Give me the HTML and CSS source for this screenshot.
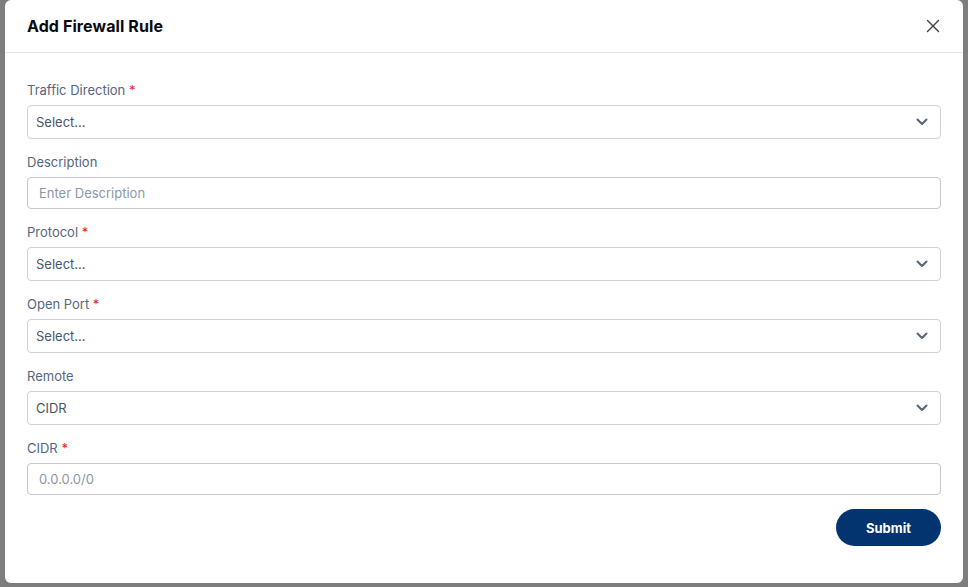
FILE: index.html
```html
<!DOCTYPE html>
<html lang="en">
<head>
  <meta charset="UTF-8" />
  <meta name="viewport" content="width=device-width, initial-scale=1" />
  <title>Add Firewall Rule</title>
  <link rel="stylesheet" href="styles.css">
</head>
<body>
  <div class="modal">
    <div class="modal-header">
      <div class="modal-title">Add Firewall Rule</div>
      <button class="modal-close" type="button" aria-label="Close">
        <svg width="14" height="14" viewBox="0 0 14 14"><path d="M1.5 1.5 L12.5 12.5 M12.5 1.5 L1.5 12.5" stroke="#3a3d44" stroke-width="1.4" stroke-linecap="round"/></svg>
      </button>
    </div>
    <form class="modal-body">
      <div class="field">
        <label>Traffic Direction <span class="req">*</span></label>
        <div class="select">
          <span>Select...</span>
          <svg width="12" height="8" viewBox="0 0 12 8"><path d="M1.5 1.5 L6 6 L10.5 1.5" fill="none" stroke="#5b6577" stroke-width="2" stroke-linecap="round" stroke-linejoin="round"/></svg>
        </div>
      </div>
      <div class="field">
        <label>Description</label>
        <input class="input" type="text" placeholder="Enter Description" />
      </div>
      <div class="field">
        <label>Protocol <span class="req">*</span></label>
        <div class="select">
          <span>Select...</span>
          <svg width="12" height="8" viewBox="0 0 12 8"><path d="M1.5 1.5 L6 6 L10.5 1.5" fill="none" stroke="#5b6577" stroke-width="2" stroke-linecap="round" stroke-linejoin="round"/></svg>
        </div>
      </div>
      <div class="field">
        <label>Open Port <span class="req">*</span></label>
        <div class="select">
          <span>Select...</span>
          <svg width="12" height="8" viewBox="0 0 12 8"><path d="M1.5 1.5 L6 6 L10.5 1.5" fill="none" stroke="#5b6577" stroke-width="2" stroke-linecap="round" stroke-linejoin="round"/></svg>
        </div>
      </div>
      <div class="field">
        <label>Remote</label>
        <div class="select">
          <span>CIDR</span>
          <svg width="12" height="8" viewBox="0 0 12 8"><path d="M1.5 1.5 L6 6 L10.5 1.5" fill="none" stroke="#5b6577" stroke-width="2" stroke-linecap="round" stroke-linejoin="round"/></svg>
        </div>
      </div>
      <div class="field">
        <label>CIDR <span class="req">*</span></label>
        <input class="input" type="text" placeholder="0.0.0.0/0" />
      </div>
      <div class="actions">
        <button type="submit" class="submit">Submit</button>
      </div>
    </form>
  </div>
</body>
</html>
```

FILE: styles.css
```css
* {
  box-sizing: border-box;
  margin: 0;
  padding: 0;
  font-family: 'Inter', 'Open Sans', sans-serif;
}
body {
  background: #7d7d7d;
  padding: 0 5px 4px;
  min-height: 100vh;
}
.modal {
  background: #fff;
  border-radius: 6px;
  height: 583px;
  display: flex;
  flex-direction: column;
}
.modal-header {
  height: 53px;
  border-bottom: 1px solid #e3e5e8;
  display: flex;
  align-items: center;
  justify-content: space-between;
  padding: 0 22px;
}
.modal-title {
  font-size: 16px;
  font-weight: 700;
  letter-spacing: 0.1px;
  color: #0b0b0f;
}
.modal-close {
  background: none;
  border: none;
  width: 20px;
  height: 20px;
  display: flex;
  align-items: center;
  justify-content: center;
  margin-right: -2px;
  cursor: pointer;
}
.modal-body {
  padding: 27px 22px 0;
  display: flex;
  flex-direction: column;
}
.field {
  display: flex;
  flex-direction: column;
  margin-bottom: 13px;
}
.field label {
  font-size: 13px;
  line-height: 20px;
  color: #56657e;
  margin-bottom: 5px;
}
.req {
  color: #e11d2a;
}
.select {
  height: 34px;
  border: 1px solid #cfd3d9;
  border-radius: 4px;
  display: flex;
  align-items: center;
  justify-content: space-between;
  padding: 0 12px 0 8px;
  font-size: 13px;
  color: #4b5566;
}
.input {
  height: 32px;
  border: 1px solid #c5c9cf;
  border-radius: 4px;
  padding: 0 11px;
  font-size: 13px;
  color: #4b5566;
  outline: none;
}
.input::placeholder {
  color: #8c97a8;
}
.actions {
  display: flex;
  justify-content: flex-end;
  margin-top: 1px;
}
.submit {
  width: 105px;
  height: 37px;
  border: none;
  border-radius: 19px;
  background: #033470;
  color: #fff;
  font-size: 13px;
  font-weight: 700;
  cursor: pointer;
}
```
